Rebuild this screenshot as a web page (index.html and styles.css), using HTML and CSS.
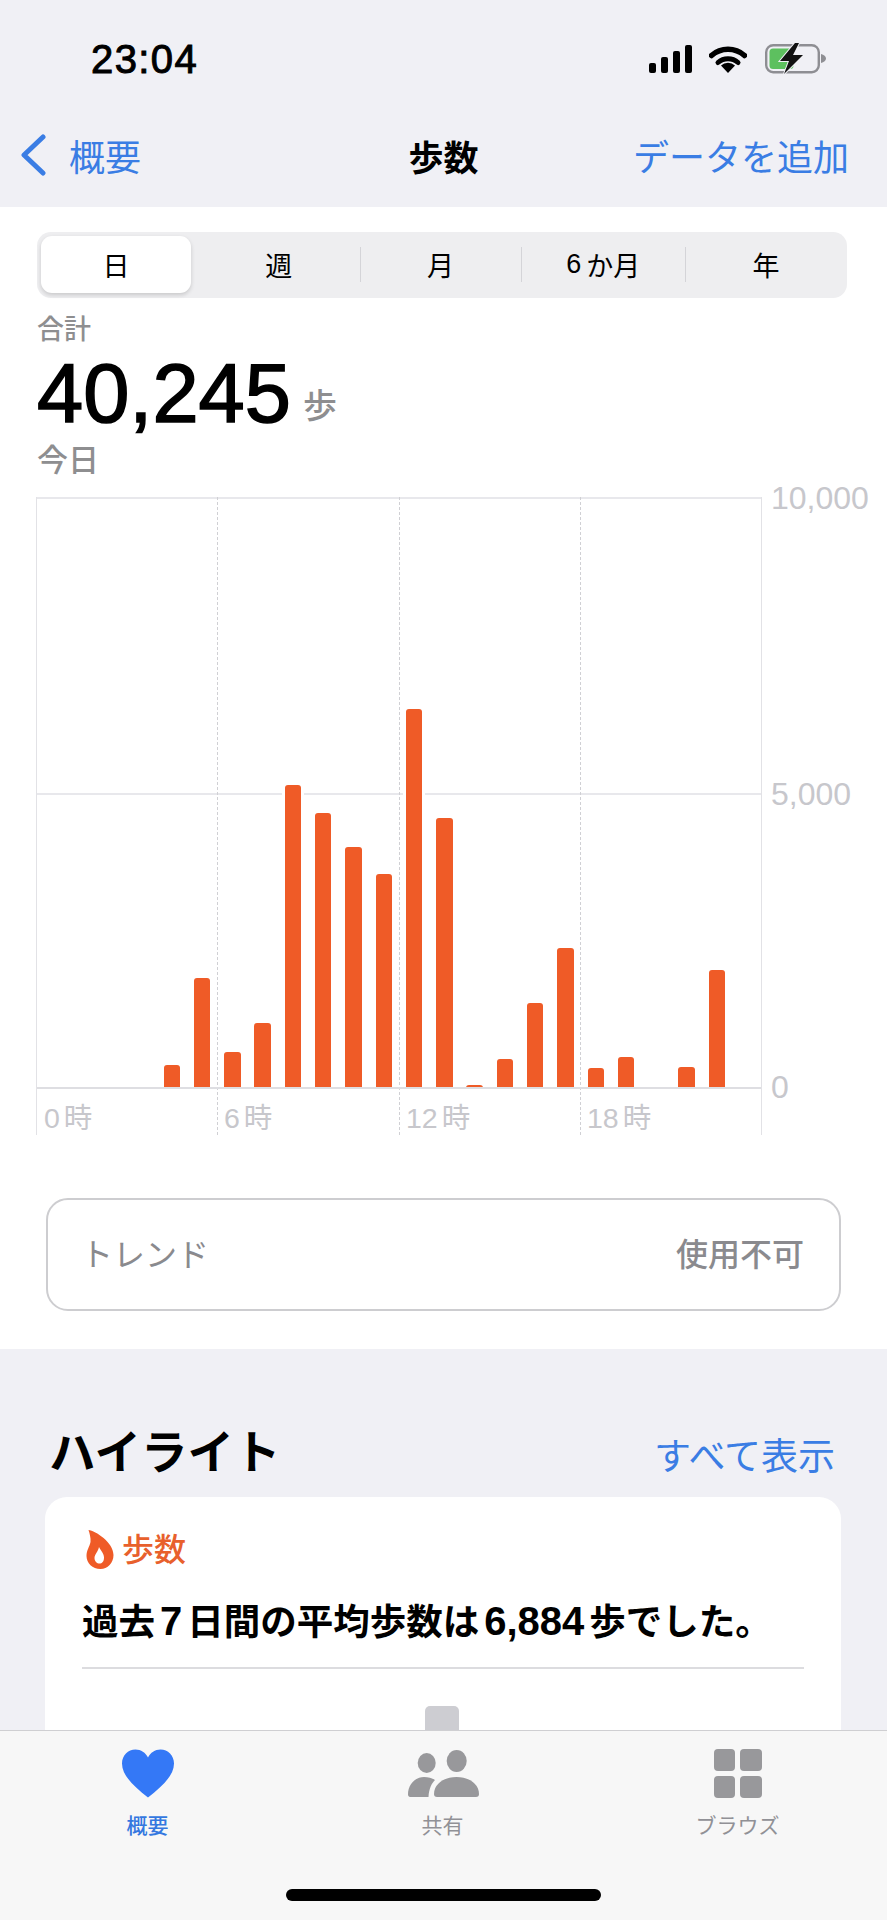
FILE: index.html
```html
<!DOCTYPE html>
<html lang="ja">
<head>
<meta charset="utf-8">
<title>歩数</title>
<link rel="stylesheet" href="styles.css">
</head>
<body>
<div class="screen">
  <header class="top">
    <div class="status">
      <span class="time">23:04</span>
      <div class="status-icons">
        <div class="signal"><i class="s1"></i><i class="s2"></i><i class="s3"></i><i class="s4"></i></div>
        <svg class="wifi" viewBox="0 0 38 27"><path d="M2.500 9.500a25 25 0 0 1 33 0" fill="none" stroke="#000" stroke-width="5.500" stroke-linecap="round"/><path d="M9 16.500a15 15 0 0 1 20 0" fill="none" stroke="#000" stroke-width="5" stroke-linecap="round"/><path d="M19 27l-7-7.500a10 10 0 0 1 14 0z" fill="#000"/></svg>
        <svg class="battery" viewBox="0 0 62 31"><rect x="1.200" y="2.200" width="52.600" height="27" rx="7" fill="none" stroke="#8e8e93" stroke-width="2.400"/><path d="M56 11v9c3-.6 5-2.400 5-4.500S59 11.600 56 11z" fill="#8e8e93"/><rect x="4.500" y="5.500" width="24" height="20.500" rx="3.500" fill="#5dc05f"/><path d="M30 0L15 18h9l-5 13 19-19h-10l6-12z" fill="#111" stroke="#f0f0f5" stroke-width="2" paint-order="stroke"/></svg>
      </div>
    </div>
    <nav class="nav">
      <div class="back">
        <svg class="chevron" viewBox="0 0 26 42"><path d="M23 3L4 21l19 18" fill="none" stroke="#3a7de4" stroke-width="5" stroke-linecap="round" stroke-linejoin="round"/></svg>
        <span>概要</span>
      </div>
      <h1 class="nav-title">歩数</h1>
      <span class="nav-action">データを追加</span>
    </nav>
  </header>

  <section class="panel">
    <div class="segments">
      <div class="seg seg-on">日</div>
      <div class="seg seg-week">週</div>
      <div class="seg seg-line">月</div>
      <div class="seg seg-line seg-six">6<span class="gap">か月</span></div>
      <div class="seg seg-line">年</div>
    </div>

    <div class="summary">
      <div class="sum-label">合計</div>
      <div class="sum-value"><span class="num">40,245</span><span class="unit">歩</span></div>
      <div class="sum-date">今日</div>
    </div>

    <div class="chart">
      <div class="plot">
        <div class="hline hl-top"></div>
        <div class="hline hl-mid"></div>
        <div class="vline vl-a"></div>
        <div class="vline vl-b"></div>
        <div class="vline vl-c"></div>
        <div class="bars">
          <i class="bar" style="height:0"></i>
          <i class="bar" style="height:0"></i>
          <i class="bar" style="height:0"></i>
          <i class="bar" style="height:0"></i>
          <i class="bar" style="height:23px"></i>
          <i class="bar" style="height:110px"></i>
          <i class="bar" style="height:36px"></i>
          <i class="bar" style="height:65px"></i>
          <i class="bar" style="height:303px"></i>
          <i class="bar" style="height:275px"></i>
          <i class="bar" style="height:241px"></i>
          <i class="bar" style="height:214px"></i>
          <i class="bar" style="height:379px"></i>
          <i class="bar" style="height:270px"></i>
          <i class="bar" style="height:3px"></i>
          <i class="bar" style="height:29px"></i>
          <i class="bar" style="height:85px"></i>
          <i class="bar" style="height:140px"></i>
          <i class="bar" style="height:20px"></i>
          <i class="bar" style="height:31px"></i>
          <i class="bar" style="height:0"></i>
          <i class="bar" style="height:21px"></i>
          <i class="bar" style="height:118px"></i>
        </div>
        <div class="hline hl-base"></div>
        <div class="xlabels">
          <span>0<b>時</b></span>
          <span>6<b>時</b></span>
          <span>12<b>時</b></span>
          <span>18<b>時</b></span>
        </div>
      </div>
      <div class="ylabels">
        <span class="y-top">10,000</span>
        <span class="y-mid">5,000</span>
        <span class="y-base">0</span>
      </div>
    </div>

    <div class="trend">
      <span class="trend-name">トレンド</span>
      <span class="trend-val">使用不可</span>
    </div>
  </section>

  <section class="highlights">
    <div class="hl-head">
      <h2>ハイライト</h2>
      <span class="hl-all">すべて表示</span>
    </div>
    <div class="card">
      <div class="card-tag">
        <svg class="flame" viewBox="0 0 27 39"><path fill-rule="evenodd" d="M2 0C9 1 27 12 27 25c0 8-6 14-13 14C6 39 0 33 0 26c0-6 3-9 4-14C4.500 8 3 3 2 0zM12.500 17c2 4 5 6.500 5 10.500 0 4-2 6-4.500 6-2.500 0-5-2-5-5.500 0-3.500 3.500-6 4.500-11z"/></svg>
        <span class="tag-text">歩数</span>
      </div>
      <p class="card-text">過去<span class="sp">7</span>日間の平均歩数は<span class="sp">6,884</span>歩でした。</p>
      <div class="card-rule"></div>
      <div class="card-bar"></div>
    </div>
  </section>

  <footer class="tabs">
    <div class="tab tab-on">
      <svg class="ico-heart" viewBox="0 0 52 48"><path d="M26 48C12 37 0 26 0 14 0 6 6 0 13.500 0 19 0 23.500 3 26 8c2.500-5 7-8 12.500-8C46 0 52 6 52 14c0 12-12 23-26 34z"/></svg>
      <span>概要</span>
    </div>
    <div class="tab">
      <svg class="ico-people" viewBox="0 0 72 47"><ellipse cx="19.700" cy="13" rx="9" ry="10"/><ellipse cx="49.700" cy="11" rx="10" ry="11"/><path d="M3 47c-1 0-2-1-2-2.500C1 35 8 27 17 27c4 0 8 1 11 3-3 3-6 8-6.500 17z"/><path d="M30 47c-2 0-3-1-3-3 0-10 10-17 22.500-17S72 34 72 44c0 2-1 3-3 3z"/></svg>
      <span>共有</span>
    </div>
    <div class="tab">
      <div class="ico-grid"><i></i><i></i><i></i><i></i></div>
      <span>ブラウズ</span>
    </div>
    <div class="home"></div>
  </footer>
</div>
</body>
</html>
```
FILE: styles.css
```css
* { box-sizing: border-box; }
html, body { margin: 0; padding: 0; }
body {
  background: #f0f0f5;
  font-family: "Liberation Sans", "Noto Sans CJK JP", sans-serif;
  color: #000;
}
.screen {
  position: relative;
  width: 887px;
  height: 1920px;
  overflow: hidden;
}

/* header */
.top { height: 207px; background: #f0f0f5; padding-top: 43px; }
.status {
  display: flex;
  justify-content: space-between;
  align-items: flex-start;
  padding-left: 91px;
  padding-right: 60px;
  height: 70px;
}
.time { font-size: 40px; line-height: 32px; -webkit-text-stroke: 1px #000; letter-spacing: 1.400px; }
.status-icons { display: flex; align-items: flex-start; }
.signal { display: flex; align-items: flex-end; gap: 5px; height: 28px; margin-top: 2px; }
.signal i { display: block; width: 7px; background: #000; border-radius: 2px; }
.s1 { height: 10px; }
.s2 { height: 16px; }
.s3 { height: 22px; }
.s4 { height: 28px; }
.wifi { width: 38px; height: 27px; margin: 3px 18px 0 17px; }
.battery { width: 62px; height: 31px; margin-top: 0; }

.nav {
  position: relative;
  display: flex;
  justify-content: space-between;
  align-items: center;
  height: 44px;
  margin-top: 20px;
  padding: 0 38px 0 20px;
  font-size: 36px;
  color: #3a7de4;
}
.back { display: flex; align-items: center; gap: 23px; }
.chevron { width: 26px; height: 42px; }
.nav-title {
  position: absolute;
  left: 0;
  right: 0;
  margin: 0;
  text-align: center;
  font-size: 35px;
  font-weight: 700;
  color: #000;
}
.nav-action { font-size: 36px; }

/* panel */
.panel { height: 1142px; background: #fff; padding: 25px 0 0 0; }
.segments {
  display: flex;
  margin: 0 40px 0 37px;
  height: 66px;
  padding: 4px 0 5px 4px;
  background: #eeeef0;
  border-radius: 14px;
}
.seg {
  position: relative;
  width: 162px;
  display: flex;
  align-items: center;
  justify-content: center;
  font-size: 27px;
}
.seg-on {
  width: 150px;
  background: #fff;
  border-radius: 11px;
  box-shadow: 0 2px 4px rgba(0, 0, 0, .16);
}
.seg-week { width: 169px; padding-left: 7px; }
.seg-six { width: 164px; }
.seg-line::before {
  content: "";
  position: absolute;
  left: 0;
  top: 11px;
  bottom: 11px;
  width: 1px;
  background: #d4d4d8;
}
.seg .gap { margin-left: 5px; }

.summary { padding-left: 37px; }
.sum-label { font-size: 27px; line-height: 32px; margin-top: 16px; color: #8e8e90; font-weight: 500; }
.sum-value { display: flex; align-items: flex-end; margin-top: 15px; height: 66px; }
.num { display: block; font-size: 83px; line-height: 66px; -webkit-text-stroke: 1.600px #000; }
.unit { font-size: 34px; line-height: 34px; color: #8e8e90; margin: 0 0 4px 12px; font-weight: 500; }
.sum-date { font-size: 31px; line-height: 40px; margin-top: 14px; color: #8e8e90; font-weight: 500; }

.chart { display: flex; margin: 16px 0 0 36px; }
.plot {
  position: relative;
  width: 726px;
  height: 638px;
  border-left: 1px solid #e2e2e6;
  border-right: 1px solid #e2e2e6;
}
.hline { position: absolute; left: 0; right: 0; height: 2px; background: #e8e8ec; }
.hl-top { top: 0; }
.hl-mid { top: 296px; }
.hl-base { top: 590px; background: #dedee2; }
.vline { position: absolute; top: 0; bottom: 0; width: 1px; border-left: 1px dashed #d0d0d4; }
.vl-a { left: 180px; }
.vl-b { left: 362px; }
.vl-c { left: 543px; }
.bars {
  position: absolute;
  left: 5.500px;
  top: 0;
  height: 591px;
  display: flex;
  align-items: flex-end;
  gap: 13.900px;
}
.bar { display: block; width: 16.400px; background: #ef5b27; border-radius: 3px 3px 0 0; box-shadow: 0 0 0 3px #fff; }
.xlabels { position: absolute; left: 0; top: 606px; width: 100%; color: #c7c7cc; font-size: 28.500px; line-height: 30px; }
.xlabels span { position: absolute; white-space: nowrap; }
.xlabels span:nth-child(1) { left: 7px; }
.xlabels span:nth-child(2) { left: 187px; }
.xlabels span:nth-child(3) { left: 369px; }
.xlabels span:nth-child(4) { left: 550px; }
.xlabels b { font-weight: 400; margin-left: 4px; }
.ylabels { position: relative; flex: 1; color: #c7c7cc; font-size: 32px; line-height: 36px; }
.ylabels span { position: absolute; left: 9px; }
.y-top { top: -17px; }
.y-mid { top: 279px; }
.y-base { top: 572px; }

.trend {
  display: flex;
  justify-content: space-between;
  align-items: center;
  margin: 63px 46px 0 46px;
  height: 113px;
  padding: 0 35px 5px 33px;
  border: 2px solid #cdcdd0;
  border-radius: 22px;
  font-size: 32px;
  color: #8a8a8e;
}
.trend-val { font-weight: 500; }

/* highlights */
.highlights { padding: 0 46px 0 45px; }
.hl-head { display: flex; justify-content: space-between; align-items: flex-end; height: 148px; padding: 0 6px 14px 4px; }
.hl-head h2 { margin: 0; font-size: 46.500px; line-height: 60px; font-weight: 700; }
.hl-all { font-size: 37px; line-height: 44px; color: #3a7de4; margin-bottom: 3px; }
.card { position: relative; height: 260px; background: #fff; border-radius: 22px 22px 0 0; padding: 32px 37px 0 37px; }
.card-tag { display: flex; align-items: center; gap: 8px; color: #e8602c; font-size: 32px; font-weight: 500; height: 40px; }
.tag-text { padding-bottom: 5px; }
.flame { width: 28px; height: 39px; margin-left: 4px; fill: #ef5b27; }
.card-text { margin: 30px 0 0 0; font-size: 36.500px; line-height: 48px; font-weight: 700; white-space: nowrap; }
.sp { margin: 0 5px; font-size: 40px; line-height: 40px; }
.card-rule { height: 2px; background: #dcdcdf; margin-top: 20px; }
.card-bar { position: absolute; left: 380px; top: 209px; width: 34px; height: 40px; background: #cdcdd2; border-radius: 5px 5px 0 0; }

/* tab bar */
.tabs {
  position: absolute;
  left: 0;
  right: 0;
  bottom: 0;
  height: 190px;
  background: #f7f7f7;
  border-top: 1px solid #cfcfd2;
  display: flex;
  padding: 18px 2px 0 0;
}
.tab {
  flex: 1;
  display: flex;
  flex-direction: column;
  align-items: center;
  font-size: 21px;
  line-height: 24px;
  color: #919196;
}
.tab-on { color: #3478e0; font-weight: 500; }
.tab svg, .ico-grid { display: block; height: 49px; margin-bottom: 16px; }
.ico-heart { width: 52px; fill: #3478f6; }
.ico-people { width: 72px; fill: #98989b; }
.ico-grid { width: 48px; display: grid; grid-template-columns: 1fr 1fr; gap: 5px; }
.ico-grid i { display: block; background: #98989b; border-radius: 4px; }
.home {
  position: absolute;
  left: 286px;
  top: 158px;
  width: 315px;
  height: 12px;
  background: #000;
  border-radius: 6px;
}
```
